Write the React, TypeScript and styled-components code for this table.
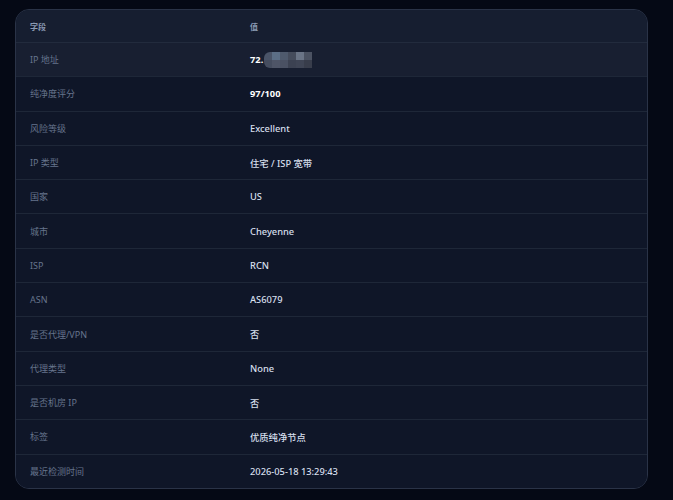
import styled, { createGlobalStyle } from "styled-components";

const GlobalStyle = createGlobalStyle`
  html, body {
    margin: 0;
    padding: 0;
    background: #050915;
  }
  body {
    font-family: "Noto Sans", "Noto Sans CJK SC", sans-serif;
  }
`;

type Row = {
  label: string;
  value: string;
  strong?: boolean;
  masked?: boolean;
};

const rows: Row[] = [
  { label: "IP 地址", value: "72.", strong: true, masked: true },
  { label: "纯净度评分", value: "97/100", strong: true },
  { label: "风险等级", value: "Excellent" },
  { label: "IP 类型", value: "住宅 / ISP 宽带" },
  { label: "国家", value: "US" },
  { label: "城市", value: "Cheyenne" },
  { label: "ISP", value: "RCN" },
  { label: "ASN", value: "AS6079" },
  { label: "是否代理/VPN", value: "否" },
  { label: "代理类型", value: "None" },
  { label: "是否机房 IP", value: "否" },
  { label: "标签", value: "优质纯净节点" },
  { label: "最近检测时间", value: "2026-05-18 13:29:43" },
];

// mosaic cells of the blurred part of the address
const mosaic = [
  ["#4a5468", "#5b6e86", "#4f5a6d", "#454c5c", "#6a7486", "#4b5262"],
  ["#454d5f", "#4e5567", "#4a5163", "#3c4252", "#3f4555", "#383d4b"],
];

export default function App() {
  return (
    <>
      <GlobalStyle />
      <Page>
        <Card>
          <HeadRow>
            <HeadCell $first>字段</HeadCell>
            <HeadCell>值</HeadCell>
          </HeadRow>
          {rows.map((r, i) => (
            <DataRow key={r.label} $hover={i === 0}>
              <Label>{r.label}</Label>
              <Value $strong={r.strong}>
                {r.value}
                {r.masked && (
                  <Mask>
                    {mosaic.map((line, y) => (
                      <MaskLine key={y}>
                        {line.map((c, x) => (
                          <MaskCell key={x} style={{ background: c }} />
                        ))}
                      </MaskLine>
                    ))}
                  </Mask>
                )}
              </Value>
            </DataRow>
          ))}
        </Card>
      </Page>
    </>
  );
}

const Page = styled.div`
  padding: 9px 25px 13px 15px;
  width: 673px;
  box-sizing: border-box;
`;

const Card = styled.div`
  background: #0f1628;
  border: 1px solid #2a3347;
  border-radius: 14px;
  overflow: hidden;
`;

const HeadRow = styled.div`
  display: grid;
  grid-template-columns: 234px 1fr;
  height: 32px;
  align-items: center;
  background: #161e30;
  border-bottom: 1px solid #222b3d;
`;

const HeadCell = styled.div<{ $first?: boolean }>`
  padding-left: ${(p) => (p.$first ? "14px" : "0")};
  font-size: 8px;
  font-weight: 700;
  color: #8a9ab3;
`;

const DataRow = styled.div<{ $hover?: boolean }>`
  display: grid;
  grid-template-columns: 234px 1fr;
  height: 33.3px;
  align-items: center;
  background: ${(p) => (p.$hover ? "#181f31" : "#0f1628")};
  border-bottom: 1px solid #1e2738;
  &:last-child {
    border-bottom: none;
  }
`;

const Label = styled.div`
  padding-left: 14px;
  font-size: 9px;
  color: #66748c;
`;

const Value = styled.div<{ $strong?: boolean }>`
  display: flex;
  align-items: center;
  font-size: 9.3px;
  font-weight: ${(p) => (p.$strong ? 700 : 500)};
  color: ${(p) => (p.$strong ? "#ffffff" : "#d6dfec")};
`;

const Mask = styled.span`
  display: inline-flex;
  flex-direction: column;
  margin-left: 1px;
  border-radius: 6px 0 0 6px;
  overflow: hidden;
`;

const MaskLine = styled.span`
  display: flex;
`;

const MaskCell = styled.span`
  width: 8px;
  height: 8px;
`;
